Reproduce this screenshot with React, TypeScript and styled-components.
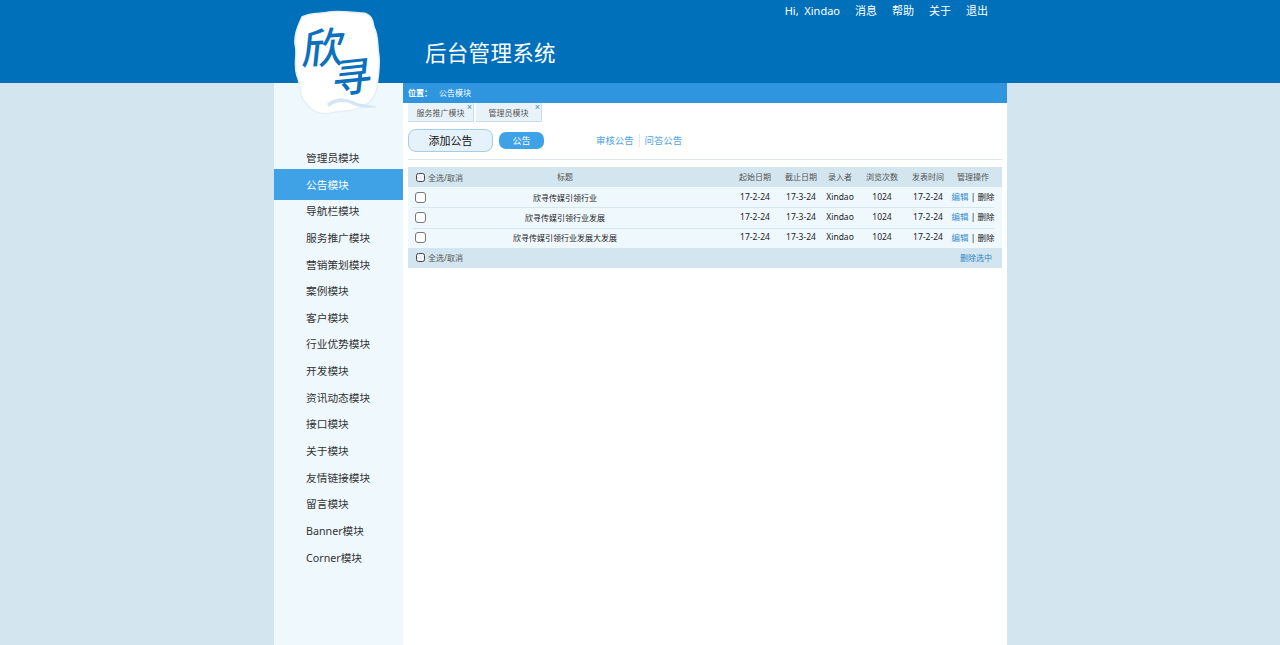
import React from 'react';
import styled, { createGlobalStyle } from 'styled-components';

const menuItems = [
  '管理员模块', '公告模块', '导航栏模块', '服务推广模块', '营销策划模块', '案例模块', '客户模块', '行业优势模块',
  '开发模块', '资讯动态模块', '接口模块', '关于模块', '友情链接模块', '留言模块', 'Banner模块', 'Corner模块',
];

const notices = ['欣寻传媒引领行业', '欣寻传媒引领行业发展', '欣寻传媒引领行业发展大发展'];

const App: React.FC = () => {
  return (
    <>
      <GlobalStyle />
      <Header>
        <HeaderInner>
          <Logo viewBox="0 0 90 108" aria-label="欣寻">
            <path
              d="M9 7 C18 2 27 4 36 2 C48 0 60 3 70 3 C78 4 80 10 81 17 C86 26 84 36 86 46 C87 58 85 68 84 76 C83 86 78 93 70 96 C60 103 48 100 38 103 C27 106 17 100 12 92 C5 85 8 74 4 66 C0 54 5 44 2 34 C1 22 6 14 9 7 Z"
              fill="#fff"
              stroke="#e3f0f8"
              strokeWidth="1.5"
            />
            <path
              d="M34 94 C42 86 54 88 62 92 C68 95 76 94 84 97 C72 99 64 97 56 93 C48 91 42 92 36 97 Z"
              fill="#d3e6f2"
            />
            <LogoWord fontSize="42" transform="translate(8 55) rotate(-4) skewX(-10)">欣</LogoWord>
            <LogoWord fontSize="40" transform="translate(38 84) rotate(-6) skewX(-12)">寻</LogoWord>
          </Logo>
          <SystemTitle>后台管理系统</SystemTitle>
          <TopNav>
            <TopLink>Hi,&nbsp; Xindao</TopLink>
            <TopLink>消息</TopLink>
            <TopLink>帮助</TopLink>
            <TopLink>关于</TopLink>
            <TopLink>退出</TopLink>
          </TopNav>
        </HeaderInner>
      </Header>
      <Page>
        <Sidebar>
          {menuItems.map((item) => (
            <MenuItem key={item} $active={item === '公告模块'}>{item}</MenuItem>
          ))}
        </Sidebar>
        <Main>
          <Crumbs>
            <strong>位置：</strong>
            <span>公告模块</span>
          </Crumbs>
          <Tabs>
            <Tab>服务推广模块<TabClose>×</TabClose></Tab>
            <Tab>管理员模块<TabClose>×</TabClose></Tab>
          </Tabs>
          <Toolbar>
            <AddButton>添加公告</AddButton>
            <Pill>公告</Pill>
            <ToolLinks>
              <ToolLink>审核公告</ToolLink>
              <ToolLink $divided>问答公告</ToolLink>
            </ToolLinks>
          </Toolbar>
          <Table>
            <HeadRow>
              <SelectAll><SmallCheck />全选/取消</SelectAll>
              <Cell>标题</Cell>
              <span />
              <Cell>起始日期</Cell>
              <Cell>截止日期</Cell>
              <Cell>录入者</Cell>
              <Cell>浏览次数</Cell>
              <Cell>发表时间</Cell>
              <Cell>管理操作</Cell>
            </HeadRow>
            {notices.map((title) => (
              <BodyRow key={title}>
                <CheckCell><RowCheck /></CheckCell>
                <TitleCell>{title}</TitleCell>
                <span />
                <Cell>17-2-24</Cell>
                <Cell>17-3-24</Cell>
                <Cell>Xindao</Cell>
                <Cell>1024</Cell>
                <Cell>17-2-24</Cell>
                <Cell><ActionLink>编辑</ActionLink> | 删除</Cell>
              </BodyRow>
            ))}
            <FootRow>
              <SelectAll><SmallCheck />全选/取消</SelectAll>
              <DeleteSelected>删除选中</DeleteSelected>
            </FootRow>
          </Table>
        </Main>
      </Page>
    </>
  );
};

const GlobalStyle = createGlobalStyle`
  html, body {
    margin: 0;
    height: 100%;
    overflow: hidden;
    background-color: #d3e5ef;
    font-family: "Noto Sans", "Noto Sans CJK SC", sans-serif;
  }
`;

const Header = styled.header`
  height: 83px;
  background-color: #0070bb;
`;

const HeaderInner = styled.div`
  position: relative;
  width: 734px;
  height: 100%;
  margin: 0 auto;
  color: white;
`;

const Logo = styled.svg`
  position: absolute;
  left: 20px;
  top: 10px;
  width: 90px;
  height: 108px;
  z-index: 2;
`;

const LogoWord = styled.text`
  fill: #0c70bd;
  font-family: "Noto Sans CJK SC", sans-serif;
  font-weight: 500;
`;

const SystemTitle = styled.h1`
  position: absolute;
  left: 152px;
  top: 38px;
  margin: 0;
  font-size: 21.5px;
  line-height: 30px;
  font-weight: 400;
  letter-spacing: 0.3px;
`;

const TopNav = styled.nav`
  position: absolute;
  right: 19px;
  top: 2px;
  display: flex;
  gap: 15px;
  font-size: 11px;
  line-height: 17px;
`;

const TopLink = styled.span`
  cursor: pointer;
  white-space: nowrap;
`;

const Page = styled.div`
  display: flex;
  width: 734px;
  height: 562px;
  margin: 0 auto;
`;

const Sidebar = styled.aside`
  box-sizing: border-box;
  width: 130px;
  padding-top: 62px;
  background-color: #eef8fd;
  border-left: 1px solid #cde3f0;
`;

const MenuItem = styled.div<{ $active?: boolean }>`
  box-sizing: border-box;
  height: ${(p) => (p.$active ? '31px' : '26.65px')};
  margin: ${(p) => (p.$active ? '-2.2px 0' : '0')};
  padding-left: 32px;
  line-height: ${(p) => (p.$active ? '32px' : '26.65px')};
  font-size: 10.7px;
  color: ${(p) => (p.$active ? 'white' : '#333')};
  background-color: ${(p) => (p.$active ? '#3fa2e6' : 'transparent')};
  cursor: pointer;
`;

const Main = styled.main`
  flex: 1;
  background-color: white;
`;

const Crumbs = styled.div`
  display: flex;
  gap: 7px;
  height: 20px;
  padding-left: 5px;
  background-color: #2f95de;
  color: white;
  font-size: 8px;
  line-height: 19px;

  strong {
    font-weight: 700;
  }
`;

const Tabs = styled.div`
  display: flex;
  gap: 2px;
  height: 19px;
  margin-left: 5px;
`;

const Tab = styled.div`
  position: relative;
  box-sizing: content-box;
  width: 65px;
  height: 18px;
  background-color: #e7f2f9;
  border-bottom: 1px solid #c5dfee;
  border-right: 1px solid #c5dfee;
  color: #555;
  font-size: 8px;
  line-height: 19px;
  text-align: center;
  white-space: nowrap;
`;

const TabClose = styled.span`
  position: absolute;
  top: -3px;
  right: 1px;
  color: #3a8dcf;
  font-size: 9px;
  line-height: 14px;
  font-family: "Liberation Sans", sans-serif;
`;

const Toolbar = styled.div`
  display: flex;
  align-items: center;
  height: 22px;
  margin: 7px 5px 0;
  padding-bottom: 8px;
  border-bottom: 1px solid #dbe8f0;
`;

const AddButton = styled.button`
  box-sizing: border-box;
  width: 85px;
  height: 23px;
  padding: 0;
  background-color: #e6f2fa;
  border: 1px solid #a5cde4;
  border-radius: 8px;
  color: #111;
  font: inherit;
  font-size: 11px;
`;

const Pill = styled.button`
  width: 45px;
  height: 17px;
  margin-left: 6px;
  padding: 0;
  border: none;
  border-radius: 7px;
  background-color: #3fa2e6;
  color: white;
  font: inherit;
  font-size: 9px;
`;

const ToolLinks = styled.div`
  display: flex;
  margin-left: 52px;
`;

const ToolLink = styled.span<{ $divided?: boolean }>`
  padding: ${(p) => (p.$divided ? '0 0 0 5px' : '0 5px 0 0')};
  border-left: ${(p) => (p.$divided ? '1px solid #dbe8f0' : 'none')};
  color: #4ba4e4;
  font-size: 9.4px;
  line-height: 13px;
`;

const Table = styled.div`
  margin: 7px 5px 0;
  font-size: 8.5px;
`;

const columns = '56px 202px 66px 46px 46px 32px 52px 40px 50px 4px';

const HeadRow = styled.div`
  display: grid;
  grid-template-columns: ${columns};
  align-items: center;
  height: 20px;
  background-color: #d3e5ef;
  color: #555;
  font-size: 8px;
`;

const BodyRow = styled.div`
  display: grid;
  grid-template-columns: ${columns};
  align-items: center;
  height: 20.33px;
  background-color: #eff8fd;
  color: #222;
  position: relative;

  & + &::before {
    content: '';
    position: absolute;
    left: 5px;
    right: 8px;
    top: 0;
    height: 1px;
    background-color: #d6e6ef;
  }
`;

const FootRow = styled.div`
  display: flex;
  justify-content: space-between;
  align-items: center;
  height: 20px;
  background-color: #d3e5ef;
  color: #555;
  font-size: 8px;
`;

const Cell = styled.span`
  padding-bottom: 2px;
  text-align: center;
  white-space: nowrap;
`;

const TitleCell = styled(Cell)`
  padding-bottom: 0;
  font-size: 8px;
`;

const CheckCell = styled.span`
  display: flex;
  padding-left: 7px;
`;

const SelectAll = styled.span`
  display: flex;
  align-items: center;
  gap: 3px;
  padding-left: 8px;
  white-space: nowrap;
`;

const SmallCheck = styled.i`
  box-sizing: border-box;
  width: 9px;
  height: 9px;
  background-color: #eef4f8;
  border: 1.2px solid #444;
  border-radius: 2.5px;
`;

const RowCheck = styled.i`
  box-sizing: border-box;
  width: 11px;
  height: 11px;
  background-color: white;
  border: 1px solid #777;
  border-radius: 3px;
`;

const ActionLink = styled.span`
  color: #3a8dcf;
`;

const DeleteSelected = styled.span`
  padding-right: 10px;
  color: #2c86c9;
`;

export default App;
